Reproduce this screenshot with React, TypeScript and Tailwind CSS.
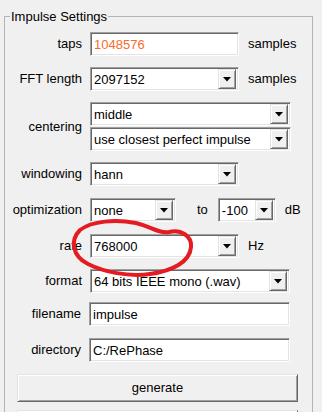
import React from "react";

const sunken =
  "border border-t-[#a0a0a0] border-l-[#a0a0a0] border-b-white border-r-white shadow-[inset_1px_1px_0_#696969,inset_-1px_-1px_0_#e3e3e3] bg-white";

function Entry({ value, w, className = "" }: { value: string; w: string; className?: string }) {
  return (
    <div className={`${sunken} ${w} h-[24px] p-[1px] flex items-center`}>
      <span className={`pl-[2px] leading-none whitespace-nowrap ${className}`}>{value}</span>
    </div>
  );
}

function Arrow() {
  return (
    <div className="h-full w-[18px] shrink-0 bg-[#f0f0f0] border border-t-[#e3e3e3] border-l-[#e3e3e3] border-b-[#696969] border-r-[#696969] shadow-[inset_1px_1px_0_#ffffff,inset_-1px_-1px_0_#a0a0a0] flex items-center justify-center">
      <svg width="8" height="5" viewBox="0 0 8 5">
        <polygon points="0,0 8,0 4,4.5" fill="#000" />
      </svg>
    </div>
  );
}

function Select({ value, w }: { value: string; w: string }) {
  return (
    <div className={`${sunken} ${w} h-[24px] p-[1px] flex items-stretch`}>
      <div className="flex-1 flex items-center pl-[2px] overflow-hidden whitespace-nowrap leading-none">
        {value}
      </div>
      <div className="py-[0px] pr-[1px] flex">
        <Arrow />
      </div>
    </div>
  );
}

function Label({ children, w = "w-[77px]" }: { children: React.ReactNode; w?: string }) {
  return <span className={`${w} shrink-0 text-right pr-0 whitespace-nowrap`}>{children}</span>;
}

const raised =
  "bg-[#f0f0f0] border border-t-[#e3e3e3] border-l-[#e3e3e3] border-b-[#696969] border-r-[#696969] shadow-[inset_1px_1px_0_#ffffff,inset_-1px_-1px_0_#a0a0a0]";

export default function App() {
  return (
    <div className="relative h-[412px] w-[322px] overflow-hidden bg-[#f0f0f0] font-['Liberation_Sans',Arial,sans-serif] text-[13px] text-black">
      <div className="pl-[4px] pr-[9px] pt-[9px]">
        <fieldset className="m-0 border border-[#b4b4b4] px-0 pb-0 pt-0 h-[480px] min-w-0">
          <legend className="ml-[5px] px-[1px] leading-[15px]">Impulse Settings</legend>
          <div className="flex flex-col pt-[8px]">
            <div className="flex items-center">
              <Label>taps</Label>
              <div className="ml-[8px]">
                <Entry value="1048576" w="w-[149px]" className="text-[#fb6a2c]" />
              </div>
              <span className="ml-[9px]">samples</span>
            </div>

            <div className="flex items-center mt-[11px]">
              <Label>FFT length</Label>
              <div className="ml-[8px]">
                <Select value="2097152" w="w-[149px]" />
              </div>
              <span className="ml-[9px]">samples</span>
            </div>

            <div className="flex items-center mt-[11px]">
              <Label>centering</Label>
              <div className="ml-[8px] flex flex-col gap-[1px]">
                <Select value="middle" w="w-[201px]" />
                <Select value="use closest perfect impulse" w="w-[201px]" />
              </div>
            </div>

            <div className="flex items-center mt-[11px]">
              <Label>windowing</Label>
              <div className="ml-[8px]">
                <Select value="hann" w="w-[149px]" />
              </div>
            </div>

            <div className="flex items-center mt-[12px]">
              <Label>optimization</Label>
              <div className="ml-[8px]">
                <Select value="none" w="w-[86px]" />
              </div>
              <span className="ml-[21px]">to</span>
              <div className="ml-[10px]">
                <Select value="-100" w="w-[58px]" />
              </div>
              <span className="ml-[9px]">dB</span>
            </div>

            <div className="flex items-center mt-[12px]">
              <Label>rate</Label>
              <div className="ml-[8px]">
                <Select value="768000" w="w-[149px]" />
              </div>
              <span className="ml-[9px]">Hz</span>
            </div>

            <div className="flex items-center mt-[11px]">
              <Label>format</Label>
              <div className="ml-[8px]">
                <Select value="64 bits IEEE mono (.wav)" w="w-[200px]" />
              </div>
            </div>

            <div className="flex items-center mt-[9px]">
              <Label w="w-[76px]">filename</Label>
              <div className="ml-[8px]">
                <Entry value="impulse" w="w-[201px]" />
              </div>
            </div>

            <div className="flex items-center mt-[12px]">
              <Label w="w-[76px]">directory</Label>
              <div className="ml-[8px]">
                <Entry value="C:/RePhase" w="w-[201px]" />
              </div>
            </div>

            <div className="mt-[12px] ml-[12px]">
              <div className={`${raised} w-[281px] h-[28px] flex items-center justify-center`}>generate</div>
            </div>

            <div className="mt-[8px] ml-[12px]">
              <div className={`${raised} w-[281px] h-[28px]`} />
            </div>
          </div>
        </fieldset>
      </div>

      <svg
        className="absolute left-0 top-0 pointer-events-none"
        width="322"
        height="412"
        viewBox="0 0 322 412"
      >
        <path
          d="M 136 223 C 115 219, 92 221, 80 230 C 70 240, 72 256, 88 264 C 104 272, 128 277, 150 274 C 172 271, 190 262, 191 247 C 192 236, 181 229, 169 232 C 159 234, 152 227, 136 223 Z"
          fill="none"
          stroke="#e41c22"
          strokeWidth="4"
          strokeLinejoin="round"
        />
      </svg>
    </div>
  );
}
